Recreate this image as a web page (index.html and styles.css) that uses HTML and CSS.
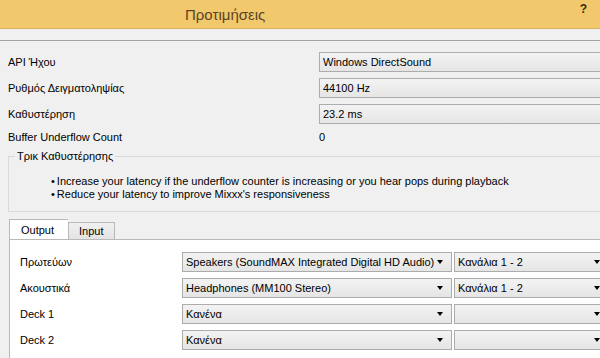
FILE: index.html
```html
<!DOCTYPE html>
<html lang="el">
<head>
    <meta charset="UTF-8">
    <title>Προτιμήσεις</title>
    <link rel="stylesheet" href="styles.css">
</head>
<body>
    <div class="janela">
        <div class="titulo">
            <span class="tituloTexto">Προτιμήσεις</span>
            <span class="ajuda">?</span>
        </div>
        <div class="faixa"></div>

        <div class="config">
            <div class="rotulo">API Ήχου</div>
            <div class="combo comboLargo"><span>Windows DirectSound</span><i class="seta"></i></div>
            <div class="rotulo">Ρυθμός Δειγματοληψίας</div>
            <div class="combo comboLargo"><span>44100 Hz</span><i class="seta"></i></div>
            <div class="rotulo">Καθυστέρηση</div>
            <div class="combo comboLargo"><span>23.2 ms</span><i class="seta"></i></div>
            <div class="rotulo linhaCurta">Buffer Underflow Count</div>
            <div class="valor linhaCurta">0</div>
        </div>

        <fieldset class="grupo">
            <legend>Τρικ Καθυστέρησης</legend>
            <ul class="dicas">
                <li>Increase your latency if the underflow counter is increasing or you hear pops during playback</li>
                <li>Reduce your latency to improve Mixxx's responsiveness</li>
            </ul>
        </fieldset>

        <div class="abas">
            <div class="aba ativa">Output</div>
            <div class="aba">Input</div>
        </div>
        <div class="painel">
            <div class="rotulo">Πρωτεύων</div>
            <div class="combo"><span>Speakers (SoundMAX Integrated Digital HD Audio)</span><i class="seta"></i></div>
            <div class="combo"><span>Κανάλια 1 - 2</span><i class="seta"></i></div>

            <div class="rotulo">Ακουστικά</div>
            <div class="combo"><span>Headphones (MM100 Stereo)</span><i class="seta"></i></div>
            <div class="combo"><span>Κανάλια 1 - 2</span><i class="seta"></i></div>

            <div class="rotulo">Deck 1</div>
            <div class="combo"><span>Κανένα</span><i class="seta"></i></div>
            <div class="combo"><span></span><i class="seta"></i></div>

            <div class="rotulo">Deck 2</div>
            <div class="combo"><span>Κανένα</span><i class="seta"></i></div>
            <div class="combo"><span></span><i class="seta"></i></div>
        </div>
    </div>
</body>
</html>
```

FILE: styles.css
```css
* {
    padding: 0px;
    margin: 0px;
    box-sizing: border-box;
}

body {
    width: 600px;
    height: 358px;
    overflow: hidden;
    background-color: #f0f0f0;
    font-family: "Liberation Sans", Arial, sans-serif;
    font-size: 11px;
    color: #000;
}

.janela {
    width: 640px;
}

/* Barra de titulo */

.titulo {
    display: flex;
    align-items: center;
    height: 29px;
    background-color: #f1c86b;
    border-bottom: 1px solid #d5ae62;
}

.tituloTexto {
    margin-left: 185px;
    font-size: 15px;
    color: #5b4426;
}

.ajuda {
    margin-left: auto;
    margin-right: 53px;
    margin-top: -10px;
    font-size: 12px;
    font-weight: bold;
    color: #3a2a14;
}

.faixa {
    height: 12px;
    border-bottom: 1px solid #a3a3a3;
}

/* Configuracoes */

.config {
    display: grid;
    grid-template-columns: 311px 400px;
    grid-template-rows: 20px 20px 20px 14px;
    row-gap: 6px;
    align-items: center;
    padding: 11px 0 0 8px;
}

.combo {
    display: flex;
    align-items: center;
    justify-content: space-between;
    height: 20px;
    padding: 0 8px 0 3px;
    border: 1px solid #acacac;
    background: linear-gradient(#f3f3f3, #e5e5e5);
    white-space: nowrap;
}

.seta {
    width: 0;
    height: 0;
    border-left: 3.5px solid transparent;
    border-right: 3.5px solid transparent;
    border-top: 4px solid #000;
}

/* Grupo de dicas */

.grupo {
    margin: 6px 0 0 8px;
    padding: 0 6px 10px;
    border: 1px solid #d9d9d9;
    height: 62px;
}

.grupo legend {
    padding: 0 2px;
    line-height: 13px;
}

.dicas {
    list-style: none;
    margin-top: 12px;
    padding-left: 36px;
    line-height: 13px;
}

.dicas li::before {
    content: "\2022";
    margin-right: 2px;
}

/* Abas */

.abas {
    display: flex;
    align-items: flex-end;
    margin: 7px 0 0 9px;
    height: 20px;
}

.aba {
    width: 47px;
    height: 17px;
    padding: 1px 0 0 10px;
    border: 1px solid #b9b9b9;
    border-bottom: none;
    background: linear-gradient(#f0f0f0, #e3e3e3);
    line-height: 15px;
}

.aba.ativa {
    width: 59px;
    height: 20px;
    padding: 3px 0 0 11px;
    background: #fff;
    border-right: none;
}

.painel {
    display: grid;
    grid-template-columns: 160px 270px 155px;
    grid-auto-rows: 20px;
    row-gap: 6px;
    column-gap: 2px;
    align-items: center;
    margin-left: 9px;
    padding: 12px 0 20px 10px;
    background-color: #fff;
    border-top: 1px solid #b9b9b9;
    border-left: 1px solid #b9b9b9;
}
```
